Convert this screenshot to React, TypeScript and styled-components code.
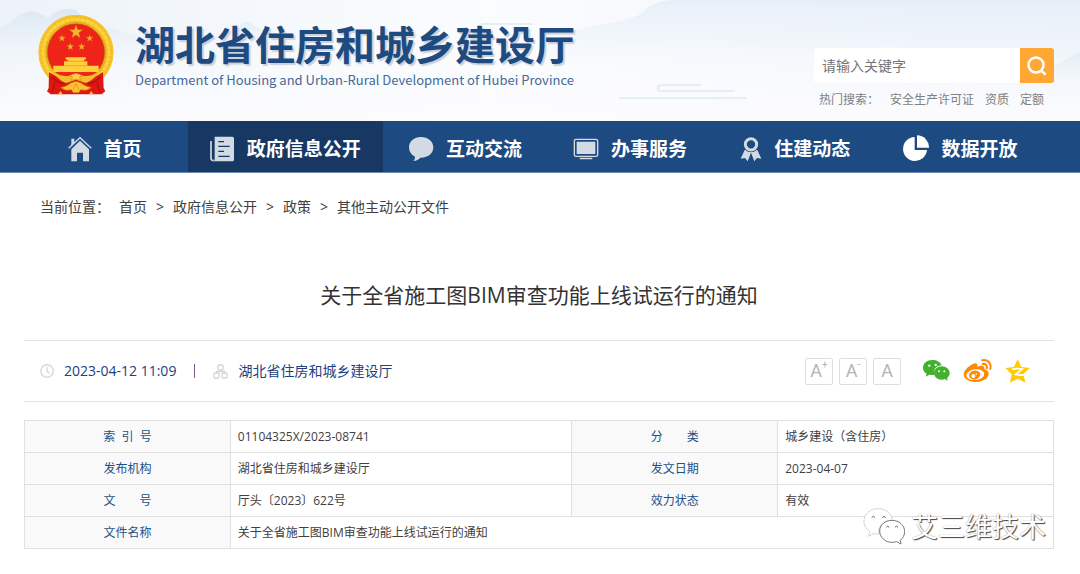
import React from "react";
import styled, { createGlobalStyle } from "styled-components";

const GlobalStyle = createGlobalStyle`
  * { box-sizing: border-box; }
  body {
    margin: 0;
    background: #fff;
    color: #404040;
    font-family: "Open Sans", "Noto Sans CJK SC", sans-serif;
    font-size: 14px;
    line-height: 20px;
  }
  a { color: inherit; text-decoration: none; }
`;

const Header = styled.header`
  position: relative;
  display: flex;
  align-items: flex-start;
  justify-content: space-between;
  min-height: 121px;
  padding: 15px 26px 0 38px;
  background: #f8fafd;
  overflow: hidden;
`;

const Landscape = styled.svg`
  position: absolute;
  inset: 0;
  width: 100%;
  height: 100%;
`;

const Brand = styled.a`
  position: relative;
  display: flex;
  gap: 21px;
`;

const BrandText = styled.span`
  display: flex;
  flex-direction: column;
  gap: 4px;
  padding-top: 4px;
  color: #1d4a80;
  font-family: "Noto Sans CJK SC", sans-serif;
  white-space: nowrap;
`;

const BrandName = styled.strong`
  font-size: 40px;
  font-weight: 700;
  line-height: 48px;
  text-shadow: 2px 2px 1px #c9d0da;
`;

const BrandSub = styled.span`
  color: #45689a;
  font-size: 13px;
  line-height: 18px;
`;

const SearchArea = styled.div`
  position: relative;
  width: 240px;
  padding-top: 33px;
`;

const SearchForm = styled.form`
  display: flex;
  height: 35px;
`;

const SearchInput = styled.input`
  flex: 1;
  min-width: 0;
  padding: 0 8px;
  border: 0;
  border-radius: 3px 0 0 3px;
  background: #fff;
  font: inherit;
  &::placeholder { color: #757575; opacity: 1; }
`;

const SearchButton = styled.button`
  display: grid;
  place-items: center;
  width: 34px;
  padding: 0;
  border: 0;
  border-radius: 0 3px 3px 0;
  background: #ffa733;
`;

const HotLinks = styled.div`
  display: flex;
  gap: 11px;
  padding: 7px 5px 0;
  color: #808080;
  font-size: 12px;
  white-space: nowrap;
`;

const Nav = styled.nav`
  display: grid;
  grid-template-columns: 165fr 195fr 165fr 165fr 165fr 165fr;
  height: 52px;
  padding: 0 36px 0 23px;
  border-bottom: 1px solid #6d8bb2;
  background: #1d4a80;
`;

const NavLink = styled.a<{ $active?: boolean }>`
  display: flex;
  align-items: center;
  justify-content: center;
  gap: 12px;
  padding: 4px 2px 0 0;
  background: ${(p) => (p.$active ? "#163863" : "transparent")};
  color: #fff;
  font-size: 19px;
  font-weight: 700;
  line-height: 28px;
  white-space: nowrap;
`;

const Main = styled.main`
  padding: 0 26px 26px 24px;
`;

const Breadcrumb = styled.nav`
  display: flex;
  gap: 9px;
  padding: 24px 16px 0;
  color: #404040;
`;

const Title = styled.h1`
  margin: 0;
  padding: 63px 0 30px;
  color: #333;
  font-size: 21px;
  font-weight: 400;
  line-height: 30px;
  text-align: center;
`;

const MetaBar = styled.div`
  display: flex;
  align-items: center;
  justify-content: space-between;
  height: 62px;
  padding: 0 24px 0 16px;
  border-top: 1px solid #e4e4e4;
  border-bottom: 1px solid #e4e4e4;
`;

const MetaInfo = styled.div`
  display: flex;
  align-items: center;
  color: #1b3f80;
  white-space: nowrap;
`;

const MetaItem = styled.span`
  display: flex;
  align-items: center;
  gap: 10px;
`;

const Divider = styled.span`
  width: 1px;
  height: 14px;
  margin: 0 18px;
  background: #7d5b90;
`;

const Tools = styled.div`
  display: flex;
  align-items: center;
`;

const SizeButton = styled.button`
  display: flex;
  align-items: center;
  justify-content: center;
  width: 28px;
  height: 27px;
  margin-right: 6px;
  padding: 0;
  border: 1px solid #dedede;
  border-radius: 2px;
  background: #fff;
  color: #b4b4b4;
  font-family: Roboto, sans-serif;
  font-size: 18px;
  line-height: 20px;
  sup {
    align-self: flex-start;
    font-size: 10px;
    line-height: 12px;
  }
`;

const Share = styled.div`
  display: flex;
  align-items: center;
  gap: 13px;
  margin-left: 15px;
  a { display: flex; }
`;

const TableWrap = styled.div`
  position: relative;
  margin-top: 18px;
`;

const InfoTable = styled.table`
  width: 100%;
  border-collapse: collapse;
  table-layout: fixed;
  font-size: 12px;
  line-height: 20px;
  th, td {
    height: 32px;
    border: 1px solid #e0e0e0;
    padding: 0 7px;
  }
  th {
    width: 20%;
    background: #f9f9f9;
    color: #1c5088;
    font-weight: 400;
    text-align: center;
  }
  td { text-align: left; }
`;

const WideCell = styled.td`
  width: 33.2%;
`;

const Watermark = styled.div`
  position: absolute;
  right: 8px;
  bottom: 2px;
  display: flex;
  align-items: center;
  gap: 6px;
  color: #fff;
  font-size: 27px;
  line-height: 40px;
  text-shadow: 1px 1px 1px #444, 0 0 1px #888;
`;

const Emblem = () => {
  const star = (x: number, y: number, r: number) => {
    const points = Array.from({ length: 10 }, (_, i) => {
      const a = -Math.PI / 2 + (i * Math.PI) / 5;
      const d = i % 2 ? r * 0.4 : r;
      return `${x + d * Math.cos(a)},${y + d * Math.sin(a)}`;
    });
    return <polygon points={points.join(" ")} fill="#f5b62c" stroke="#d8801c" strokeWidth="1" />;
  };
  return (
    <svg width="76" height="80" viewBox="24 30 228 240" role="img" aria-label="国徽">
      <circle cx="138" cy="142" r="113" fill="#f7c62c" />
      <circle cx="138" cy="142" r="107" fill="none" stroke="#f0b222" strokeWidth="3" strokeDasharray="7 5" />
      <circle cx="138" cy="142" r="99" fill="none" stroke="#ffd648" strokeWidth="6" strokeDasharray="11 4" />
      <circle cx="138" cy="142" r="90" fill="none" stroke="#e4a21b" strokeWidth="3" />
      <circle cx="138" cy="142" r="86" fill="#ed2417" stroke="#b06c10" strokeWidth="2" />
      {star(138, 81, 21)}
      {star(96, 100, 11)}
      {star(179, 100, 11)}
      {star(121, 125, 11)}
      {star(155, 125, 11)}
      <path d="M107 157h60v7h-5v5h10v13h34v19H70v-19h32v-13h11v-5h-6Z" fill="#ffcf3d" />
      <path d="M110 169h56M102 182h72" stroke="#e5961d" strokeWidth="2" />
      <path d="M57 202 73 211l31 17 34-5 34 5 32-17 15-10 2 48 5 10-11 9H62l-11-9 5-10Z" fill="#df1710" />
      <path d="M66 216c10 12 22 19 38 22M210 216c-10 12-22 19-38 22M75 232l-8 28M201 232l8 28" fill="none" stroke="#b50e0c" strokeWidth="4" />
      <path d="M70 201c10 17 22 27 39 33l29-10 29 10c17-6 29-16 39-33-16 10-32 13-44 12l-24-8-24 8c-12 1-28-2-44-12Z" fill="#f4bd2c" />
      <path d="M84 201h108q-18 10-32 6l-22-5-22 5q-14 4-32-6Z" fill="#ee2819" />
      <path d="M118 214q20-16 40 0l-10 2 6 10-16-4-16 4 6-10Z" fill="#ffd348" stroke="#dc8a1b" strokeWidth="2" />
      <path d="M92 248q20-4 30-14l16-5 16 5q10 10 30 14-16 12-32 6l-6 9h-16l-6-9q-16 6-32-6Z" fill="#ffc22e" stroke="#d56d14" strokeWidth="2" />
      <path d="m138 236-8 18M138 236l8 18" stroke="#dc7d19" strokeWidth="2" />
      <path d="m92 258 6 10H84ZM183 258l8 10h-14Z" fill="#ffc22e" />
    </svg>
  );
};

const HomeIcon = () => (
  <svg width="24" height="26" viewBox="0 0 72 78" fill="#d3dae4" aria-hidden="true">
    <path d="M10 8h9v12l-9 9Z" />
    <path d="M2 37 36 5l34 32" fill="none" stroke="#d3dae4" strokeWidth="4" />
    <path d="m36 14 27 26v36H45V50H27v26H10V40Z" />
  </svg>
);

const NewsIcon = () => (
  <svg width="26" height="26" viewBox="0 0 78 78" aria-hidden="true">
    <path d="M6 15v53q1 6 8 6" fill="none" stroke="#d3dae4" strokeWidth="5" />
    <path d="M17 2h53q5 0 5 5v64q0 5-5 5H14q3-4 3-8Z" fill="#d3dae4" />
    <path d="M28 17h17M28 31h34M28 46h17M28 61h34" stroke="#163863" strokeWidth="4" />
  </svg>
);

const ChatIcon = () => (
  <svg width="26" height="26" viewBox="0 0 78 78" aria-hidden="true">
    <path d="M39 3C18 3 3 16 3 34c0 13 7 22 18 28 0 6-2 9-5 13 10-1 16-4 21-10 22 1 39-12 39-31C76 16 60 3 39 3Z" fill="#d3dae4" />
  </svg>
);

const ScreenIcon = () => (
  <svg width="26" height="24" viewBox="0 0 78 72" aria-hidden="true">
    <rect x="4" y="7" width="70" height="51" rx="5" fill="none" stroke="#d3dae4" strokeWidth="4" />
    <path d="M11 14h56v37H11ZM20 62h38v5H20Z" fill="#d3dae4" />
  </svg>
);

const MedalIcon = () => (
  <svg width="22" height="26" viewBox="0 0 66 78" aria-hidden="true">
    <path d="M14 42 2 68l13-2 8 10 10-26 10 26 8-10 13 2-12-26Z" fill="#d3dae4" />
    <circle cx="33" cy="25" r="24" fill="#1d4a80" />
    <circle cx="33" cy="25" r="17" fill="none" stroke="#d3dae4" strokeWidth="9" />
  </svg>
);

const PieIcon = () => (
  <svg width="26" height="27" viewBox="0 0 78 81" fill="#fff" aria-hidden="true">
    <path d="M35 6v39h37A36 36 0 1 1 35 6Z" />
    <path d="M42 1a36 36 0 0 1 36 37H42Z" />
  </svg>
);

const ClockIcon = () => (
  <svg width="14" height="14" viewBox="0 0 14 14" fill="none" stroke="#d8d8d8" strokeWidth="1.4" aria-hidden="true">
    <circle cx="7" cy="7" r="6.2" />
    <path d="M7 3v4.2l2.5 2.3" />
  </svg>
);

const OrgIcon = () => (
  <svg width="15" height="15" viewBox="0 0 15 15" fill="none" stroke="#d5d5d5" strokeWidth="1.3" aria-hidden="true">
    <rect x="5" y="1" width="5" height="5" rx="1" />
    <rect x="1" y="9" width="5" height="5" rx="1" />
    <rect x="9" y="9" width="5" height="5" rx="1" />
    <path d="M7.500 6v1.500M3.500 9V7.500h8V9" />
  </svg>
);

const WechatIcon = () => (
  <svg width="28" height="24" viewBox="0 0 84 72" aria-hidden="true">
    <path d="M31 3C15 3 3 13 3 26c0 8 4 14 11 18l-3 9 11-6q8 2 15 1C32 31 44 19 59 19 55 9 44 3 31 3Z" fill="#43b02e" />
    <path d="M59 22c-13 0-23 9-23 20s10 20 23 20q5 0 9-2l9 5-2-8c5-4 8-9 8-15 0-11-11-20-24-20Z" fill="#43b02e" />
    <g fill="#fff">
      <circle cx="22" cy="20" r="3.500" /><circle cx="41" cy="18" r="3.500" />
      <circle cx="51" cy="37" r="3" /><circle cx="67" cy="37" r="3" />
    </g>
  </svg>
);

const WeiboIcon = () => (
  <svg width="29" height="24" viewBox="0 0 87 72" aria-hidden="true">
    <path d="M32 14c8-3 13 0 11 9 12-5 24-3 21 8 8 3 13 7 13 14 0 13-18 24-38 24C18 69 2 60 2 46c0-12 17-28 30-32Z" fill="#ff8a00" />
    <ellipse cx="37" cy="47" rx="27" ry="16" fill="#fff" transform="rotate(-7 37 47)" />
    <ellipse cx="35" cy="48" rx="17" ry="13" fill="#ff8a00" transform="rotate(-15 35 48)" />
    <circle cx="31" cy="51" r="6" fill="#fff" />
    <circle cx="40" cy="45" r="2.500" fill="#fff" />
    <path d="M57 4c17-4 29 9 25 26M59 15c9-2 15 5 12 13" fill="none" stroke="#ff8a00" strokeWidth="6" strokeLinecap="round" />
  </svg>
);

const QzoneIcon = () => (
  <svg width="25" height="24" viewBox="0 0 75 72" aria-hidden="true">
    <path d="m38 1 11 23 25 3-19 18 6 26-23-12-23 12 5-26L1 27l26-3Z" fill="#ffcb08" />
    <path d="M21 31q16-4 31-1L32 46q15 4 30 1" fill="none" stroke="#fff" strokeWidth="5" />
  </svg>
);

const WatermarkIcon = () => (
  <svg width="42" height="40" viewBox="0 0 126 120" fill="#fff" stroke="#999" strokeWidth="2" aria-hidden="true">
    <path d="M46 5C21 5 3 21 3 42c0 14 7 24 17 31l-3 15 17-9q6 2 15 2c-7-24 15-43 40-40C85 19 68 5 46 5Z" strokeDasharray="3 2" />
    <path d="M87 40c-21 0-37 14-37 32s16 35 38 34q7 0 13-2l13 7-2-11c7-7 13-15 13-26 0-19-17-34-38-34Z" stroke="#777" strokeWidth="3" />
    <path d="M26 32q5-8 10 0M58 32q5-8 10 0M70 61q4-7 9 0M96 61q4-7 9 0" fill="none" stroke="#666" strokeWidth="3" />
  </svg>
);

const navItems = [
  { label: "首页", Icon: HomeIcon },
  { label: "政府信息公开", Icon: NewsIcon, active: true },
  { label: "互动交流", Icon: ChatIcon },
  { label: "办事服务", Icon: ScreenIcon },
  { label: "住建动态", Icon: MedalIcon },
  { label: "数据开放", Icon: PieIcon },
];

const crumbs = ["首页", "政府信息公开", "政策", "其他主动公开文件"];

const rows = [
  ["索\u00a0\u00a0引\u00a0\u00a0号", "01104325X/2023-08741", "分\u3000\u3000类", "城乡建设（含住房）"],
  ["发布机构", "湖北省住房和城乡建设厅", "发文日期", "2023-04-07"],
  ["文\u3000\u3000号", "厅头〔2023〕622号", "效力状态", "有效"],
];

export default function App() {
  return (
    <>
      <GlobalStyle />
      <Header>
        <Landscape viewBox="0 0 1080 121" preserveAspectRatio="none" aria-hidden="true">
          <defs>
            <linearGradient id="sky" x2="1">
              <stop offset="0" stopColor="#edf3f9" />
              <stop offset="0.45" stopColor="#fbfcfe" />
              <stop offset="1" stopColor="#edf2f9" />
            </linearGradient>
            <linearGradient id="floor" x2="0" y2="1">
              <stop offset="0.3" stopColor="#fcfcfe" stopOpacity="0" />
              <stop offset="1" stopColor="#fcfcfe" />
            </linearGradient>
            <linearGradient id="hill" x2="0" y2="1">
              <stop offset="0" stopColor="#dbe7f1" />
              <stop offset="1" stopColor="#f3f7fb" stopOpacity="0" />
            </linearGradient>
            <linearGradient id="farHill" x2="0" y2="1">
              <stop offset="0" stopColor="#e6eff8" />
              <stop offset="1" stopColor="#f4f8fc" stopOpacity="0" />
            </linearGradient>
          </defs>
          <path d="M0 0h1080v121H0Z" fill="url(#sky)" />
          <path d="M0 28Q14 21 18 16q14-10 30 2 12-12 28-8 8 10 20 13 12 5 24 8l30 7 60 28H0Z" fill="url(#hill)" />
          <path d="M205 52q22-16 32-23 8-12 16-4 22 12 37 15 14 6 30 20H200Z" fill="url(#farHill)" />
          <path d="M540 60q16-28 40-31l40-8q18-2 30-15 12-6 22-6h408v80H540Z" fill="url(#farHill)" />
          <path d="m1034 84 23-19 23-13v50h-50Z" fill="url(#hill)" />
          <path d="M0 0h1080v121H0Z" fill="url(#floor)" />
          <path d="M620 98h126M700 85h-36q-9 0-5 6h75M482 24h50" fill="none" stroke="#e5edf6" strokeWidth="2" strokeLinecap="round" />
        </Landscape>
        <Brand href="#">
          <Emblem />
          <BrandText>
            <BrandName>湖北省住房和城乡建设厅</BrandName>
            <BrandSub>Department of Housing and Urban-Rural Development of Hubei Province</BrandSub>
          </BrandText>
        </Brand>
        <SearchArea>
          <SearchForm role="search">
            <SearchInput type="text" aria-label="搜索" placeholder="请输入关键字" />
            <SearchButton type="button" aria-label="搜索">
              <svg width="20" height="20" viewBox="0 0 20 20" fill="none" stroke="#fff" strokeWidth="2.500" strokeLinecap="round">
                <circle cx="9" cy="9" r="7.500" />
                <path d="m14.500 15 3.500 3" />
              </svg>
            </SearchButton>
          </SearchForm>
          <HotLinks>
            <span>热门搜索：</span>
            <a href="#">安全生产许可证</a>
            <a href="#">资质</a>
            <a href="#">定额</a>
          </HotLinks>
        </SearchArea>
      </Header>
      <Nav>
        {navItems.map(({ label, Icon, active }) => (
          <NavLink key={label} href="#" $active={active}>
            <Icon />
            {label}
          </NavLink>
        ))}
      </Nav>
      <Main>
        <Breadcrumb aria-label="当前位置">
          <span>当前位置：</span>
          {crumbs.map((crumb, i) => (
            <React.Fragment key={crumb}>
              {i > 0 && <span>&gt;</span>}
              <a href="#">{crumb}</a>
            </React.Fragment>
          ))}
        </Breadcrumb>
        <Title>关于全省施工图BIM审查功能上线试运行的通知</Title>
        <MetaBar>
          <MetaInfo>
            <MetaItem>
              <ClockIcon />
              2023-04-12 11:09
            </MetaItem>
            <Divider />
            <MetaItem>
              <OrgIcon />
              湖北省住房和城乡建设厅
            </MetaItem>
          </MetaInfo>
          <Tools>
            <SizeButton type="button" aria-label="放大字体">A<sup>+</sup></SizeButton>
            <SizeButton type="button" aria-label="缩小字体">A<sup>-</sup></SizeButton>
            <SizeButton type="button" aria-label="默认字体">A</SizeButton>
            <Share>
              <a href="#" aria-label="微信"><WechatIcon /></a>
              <a href="#" aria-label="微博"><WeiboIcon /></a>
              <a href="#" aria-label="QQ空间"><QzoneIcon /></a>
            </Share>
          </Tools>
        </MetaBar>
        <TableWrap>
          <InfoTable>
            <tbody>
              {rows.map(([labelA, valueA, labelB, valueB]) => (
                <tr key={labelA}>
                  <th scope="row">{labelA}</th>
                  <WideCell>{valueA}</WideCell>
                  <th scope="row">{labelB}</th>
                  <td>{valueB}</td>
                </tr>
              ))}
              <tr>
                <th scope="row">文件名称</th>
                <td colSpan={3}>关于全省施工图BIM审查功能上线试运行的通知</td>
              </tr>
            </tbody>
          </InfoTable>
          <Watermark>
            <WatermarkIcon />
            艾三维技术
          </Watermark>
        </TableWrap>
      </Main>
    </>
  );
}
